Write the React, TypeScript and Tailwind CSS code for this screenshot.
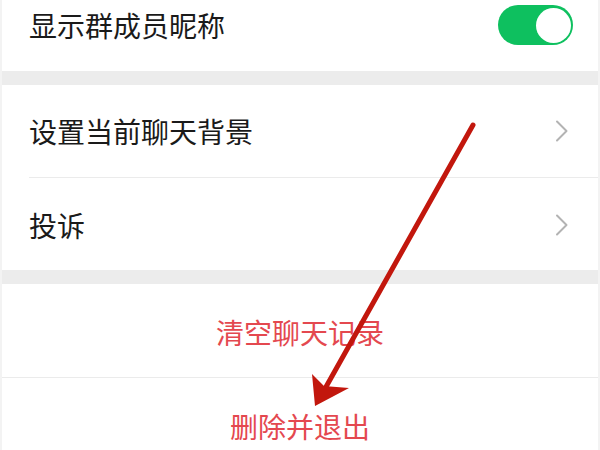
import React from "react";

const font = { fontFamily: '"Noto Sans CJK SC", "Noto Sans", sans-serif' };

function Chevron() {
  return (
    <svg width="14" height="22" viewBox="0 0 14 22" className="shrink-0">
      <path d="M2 1.5 L11.5 11 L2 20.5" fill="none" stroke="#b3b3b3" strokeWidth="2" strokeLinecap="round" strokeLinejoin="round" />
    </svg>
  );
}

export default function App() {
  return (
    <div className="relative w-[600px] h-[450px] overflow-hidden bg-white text-[#1a1a1a]" style={font}>
      <div className="flex flex-col border-l-2 border-r-2 border-[#f3f3f3]">
        <div className="flex h-[71px] items-center justify-between pb-[21px] pl-[27px] pr-[25px]">
          <span className="text-[28px] leading-none">显示群成员昵称</span>
          <div className="flex h-[40px] w-[75px] items-center justify-end rounded-full bg-[#0ec05f] pr-[2px]">
            <div className="h-[35px] w-[35px] rounded-full bg-white" />
          </div>
        </div>
        <div className="h-[14px] bg-[#ececec]" />
        <div className="flex h-[92px] items-center justify-between pl-[27px] pr-[29px]">
          <span className="text-[28px] leading-none">设置当前聊天背景</span>
          <Chevron />
        </div>
        <div className="ml-[27px] h-px bg-[#ebebeb]" />
        <div className="flex h-[92px] items-center justify-between pl-[27px] pr-[29px] pt-[2px]">
          <span className="text-[28px] leading-none">投诉</span>
          <Chevron />
        </div>
        <div className="h-[14px] bg-[#ececec]" />
        <div className="flex h-[93px] items-center justify-center pt-[2px]">
          <span className="text-[28px] leading-none text-[#e4484f]">清空聊天记录</span>
        </div>
        <div className="h-px bg-[#ebebeb]" />
        <div className="flex h-[96px] items-center justify-center">
          <span className="text-[28px] leading-none text-[#e4484f]">删除并退出</span>
        </div>
      </div>
      <svg className="pointer-events-none absolute left-0 top-0" width="600" height="450" viewBox="0 0 600 450">
        <line x1="473" y1="125" x2="322" y2="394" stroke="#c2170d" strokeWidth="5" strokeLinecap="round" />
        <polygon points="315,406 312,374 324,386 349,388" fill="#c2170d" />
      </svg>
    </div>
  );
}
